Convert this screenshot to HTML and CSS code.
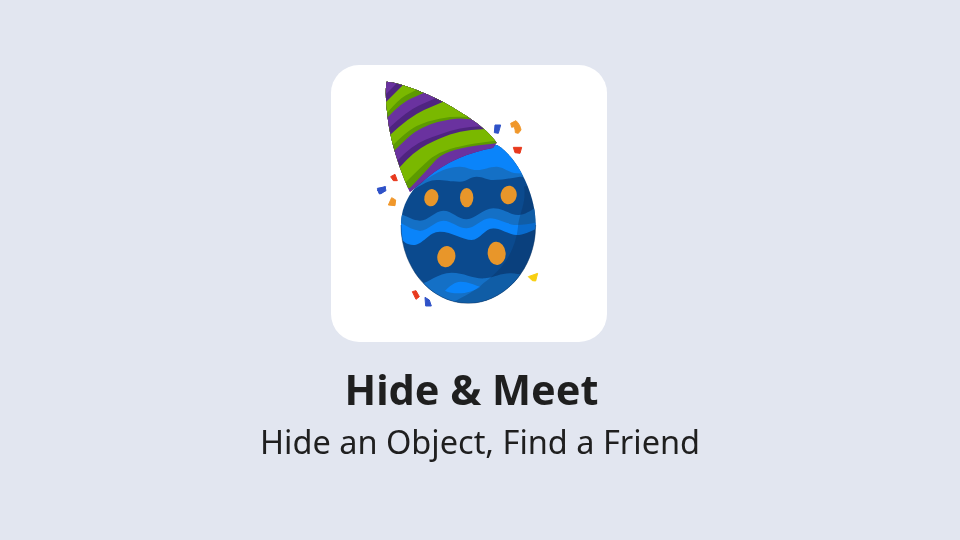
FILE: index.html
```html
<!DOCTYPE html>
<html lang="en">
<head>
<meta charset="utf-8">
<title>Hide &amp; Meet</title>
<link rel="stylesheet" href="styles.css">
</head>
<body>
<main class="splash">
  <div class="app-icon">
    <svg class="art" viewBox="331 65 276 277" width="276" height="277" aria-hidden="true">
      <defs>
        <clipPath id="egg"><path d="M381 -105C440 -70 497 40 497 135C497 270 400 370 295 370C180 370 93 260 93 135C93 40 170 -50 381 -105Z"/></clipPath>
        <clipPath id="hat"><path d="M386.700 81.700C403 83 440 98 460 112C477 122 490 133 496.700 142.700L493 148C470 152 445 162 427 178C420 184 415 188 410 192C398 167 390 137 388 120C386 103 385 90 386.700 81.700Z"/></clipPath>
      </defs>
      <g transform="translate(370 180) scale(.33333)">
        <g clip-path="url(#egg)">
          <rect x="80" y="-120" width="430" height="510" fill="#0b4a8e"/>
          <path d="M80 -120H510V-10L450 -10C420 -5 395 0 370 0C350 0 340 -10 320 -10C300 -10 290 5 270 5C240 5 225 0 200 0C180 0 165 10 145 20L80 60Z" fill="#1470c6"/>
          <path d="M80 -120H510V-5C490 -15 465 -20 440 -20C420 -20 400 -40 380 -40C355 -40 345 -30 320 -30C300 -30 290 -40 270 -40C250 -40 235 -35 220 -30C195 -20 175 -5 150 10L80 60Z" fill="#0a84fa"/>
          <path d="M80 100C110 105 125 122 150 122S195 92 220 92S265 118 290 118S340 85 370 85S420 105 445 105S490 85 510 75L510 140L80 155Z" fill="#1470c6"/>
          <path d="M80 125C110 135 125 152 150 152S195 122 220 122S265 145 290 145S335 115 360 115S415 135 440 135S490 130 510 125L510 140C490 150 465 165 440 165S395 145 370 145S330 180 305 180S245 155 210 155S160 195 130 195S95 175 80 155Z" fill="#0a84fa"/>
          <path d="M150 310C175 312 200 278 245 278C285 278 310 298 345 295C375 292 395 278 425 280C450 282 470 290 510 270L510 380L100 380Z" fill="#1470c6"/>
          <path d="M225 332C240 318 255 305 272 305C295 305 315 316 332 320C315 332 290 340 265 340C250 340 235 338 225 332Z" fill="#0a84fa"/>
          <path d="M462 20C470 60 450 100 445 130C440 200 410 260 340 310C320 330 290 345 240 372L520 400L520 0Z" fill="#06284f" opacity=".26"/>
        </g>
        <path d="M497 135C497 270 400 370 295 370C180 370 93 260 93 135" fill="none" stroke="#0a2f5c" stroke-width="3" opacity=".45"/>
        <g fill="#e8962a">
          <ellipse cx="184" cy="53" rx="21" ry="26" transform="rotate(12 184 53)"/>
          <ellipse cx="290" cy="53" rx="20" ry="29"/>
          <ellipse cx="416" cy="45" rx="24" ry="28" transform="rotate(10 416 45)"/>
          <ellipse cx="229" cy="230" rx="27" ry="32" transform="rotate(12 229 230)"/>
          <ellipse cx="380" cy="220" rx="27" ry="35" transform="rotate(-4 380 220)"/>
        </g>
        <path class="bit bit-orange" d="M55 75L65 53L77 60L75 77Z"/>
        <path class="bit bit-blue" d="M22 25L47 20L38 38L28 42Z"/>
        <path class="bit bit-yellow" d="M475 290L503 280L497 303L487 302Z"/>
        <path class="bit bit-red" d="M127 335L138 332L148 350L138 358Z"/>
        <path class="bit bit-blue" d="M165 352L178 360L184 378L167 378Z"/>
      </g>
      <g clip-path="url(#hat)">
        <rect x="380" y="70" width="125" height="130" fill="#4f2480"/>
        <path d="M410 192Q428 176 446 166T493 148L510 142V70H380V192Z" fill="#6a329f"/>
        <path d="M410 188Q428 169 434 162Q440 155 450 151.500Q460 148 477 145.500L500 143V70H380V188Z" fill="#5c9a00"/>
        <path d="M405 183Q425 163 432 157.500Q440 152 450 149Q460 146 475 143.500L500 140V70H380V183Z" fill="#7ab800"/>
        <path d="M399 168Q414 151 427 144.500Q440 138 450 134.500Q460 131 471 130L500 128V70H380V168Z" fill="#4f2480"/>
        <path d="M397 161Q412 145 426 139.500Q440 134 450 131Q460 128 470 127L500 125V70H380V161Z" fill="#6a329f"/>
        <path d="M394 151Q409 136 415 132Q421 128 430 124.500Q440 121 450 119.500Q460 118 466 119L500 121V70H380V151Z" fill="#5c9a00"/>
        <path d="M392 146Q402 136 409.500 130.500Q417 125 428 121.500Q440 118 450 117Q460 116 500 118V70H380V146Z" fill="#7ab800"/>
        <path d="M390 135Q409 117 424 110L445 101V70H380V135Z" fill="#4f2480"/>
        <path d="M389 128Q407 111 419 105.500L436 98V70H380V128Z" fill="#6a329f"/>
        <path d="M388 117Q401 103 411 98.500L426 92V70H380V117Z" fill="#5c9a00"/>
        <path d="M387 113Q399 99 405.500 95.500L416 90V70H380V113Z" fill="#7ab800"/>
        <path d="M385 103L404 84V70H380Z" fill="#4f2480"/>
        <path d="M385 95L399 81V70H380Z" fill="#6a329f"/>
      </g>
      <g transform="translate(360 70) scale(.33333)">
        <path class="bit bit-blue" d="M405 165L422 165L415 190L403 188Z"/>
        <path class="bit bit-orange" d="M452 160L468 152C476 160 482 170 483 180L475 190L466 188C466 180 464 174 462 170L455 172Z"/>
        <path class="bit bit-red" d="M460 232L485 232L480 250L465 248Z"/>
        <path class="bit bit-red" d="M92 320L105 313L112 332L100 332Z"/>
        <path class="bit bit-blue" d="M52 360L75 350L78 362L60 372Z"/>
      </g>
    </svg>
  </div>
  <h1 class="title">Hide &amp; Meet</h1>
  <p class="tagline">Hide an Object, Find a Friend</p>
</main>
</body>
</html>
```
FILE: styles.css
```css
html, body {
  margin: 0;
  padding: 0;
  height: 100%;
}
body {
  background: #e2e6f0;
  color: #1f1f1f;
  font-family: "Noto Sans", "Open Sans", sans-serif;
  overflow: hidden;
}
.splash {
  display: flex;
  flex-direction: column;
  align-items: center;
  padding-top: 65px;
}
.app-icon {
  width: 276px;
  height: 277px;
  margin-right: 22px;
  background: #fff;
  border-radius: 28px;
  overflow: hidden;
}
.art {
  display: block;
  filter: blur(0.5px);
}
.bit {
  stroke-width: 3;
  stroke-linejoin: round;
}
.bit-orange {
  fill: #f0972a;
  stroke: #f0972a;
}
.bit-blue {
  fill: #2f52c8;
  stroke: #2f52c8;
}
.bit-red {
  fill: #e8391d;
  stroke: #e8391d;
}
.bit-yellow {
  fill: #f8cf10;
  stroke: #f8cf10;
}
.title {
  margin: 20px 17px 0 0;
  font-size: 41.4px;
  line-height: 54px;
  font-weight: 700;
  filter: blur(0.3px);
}
.tagline {
  margin: 4px 0 0;
  font-size: 32.5px;
  line-height: 44px;
  font-weight: 400;
  filter: blur(0.3px);
}
```
